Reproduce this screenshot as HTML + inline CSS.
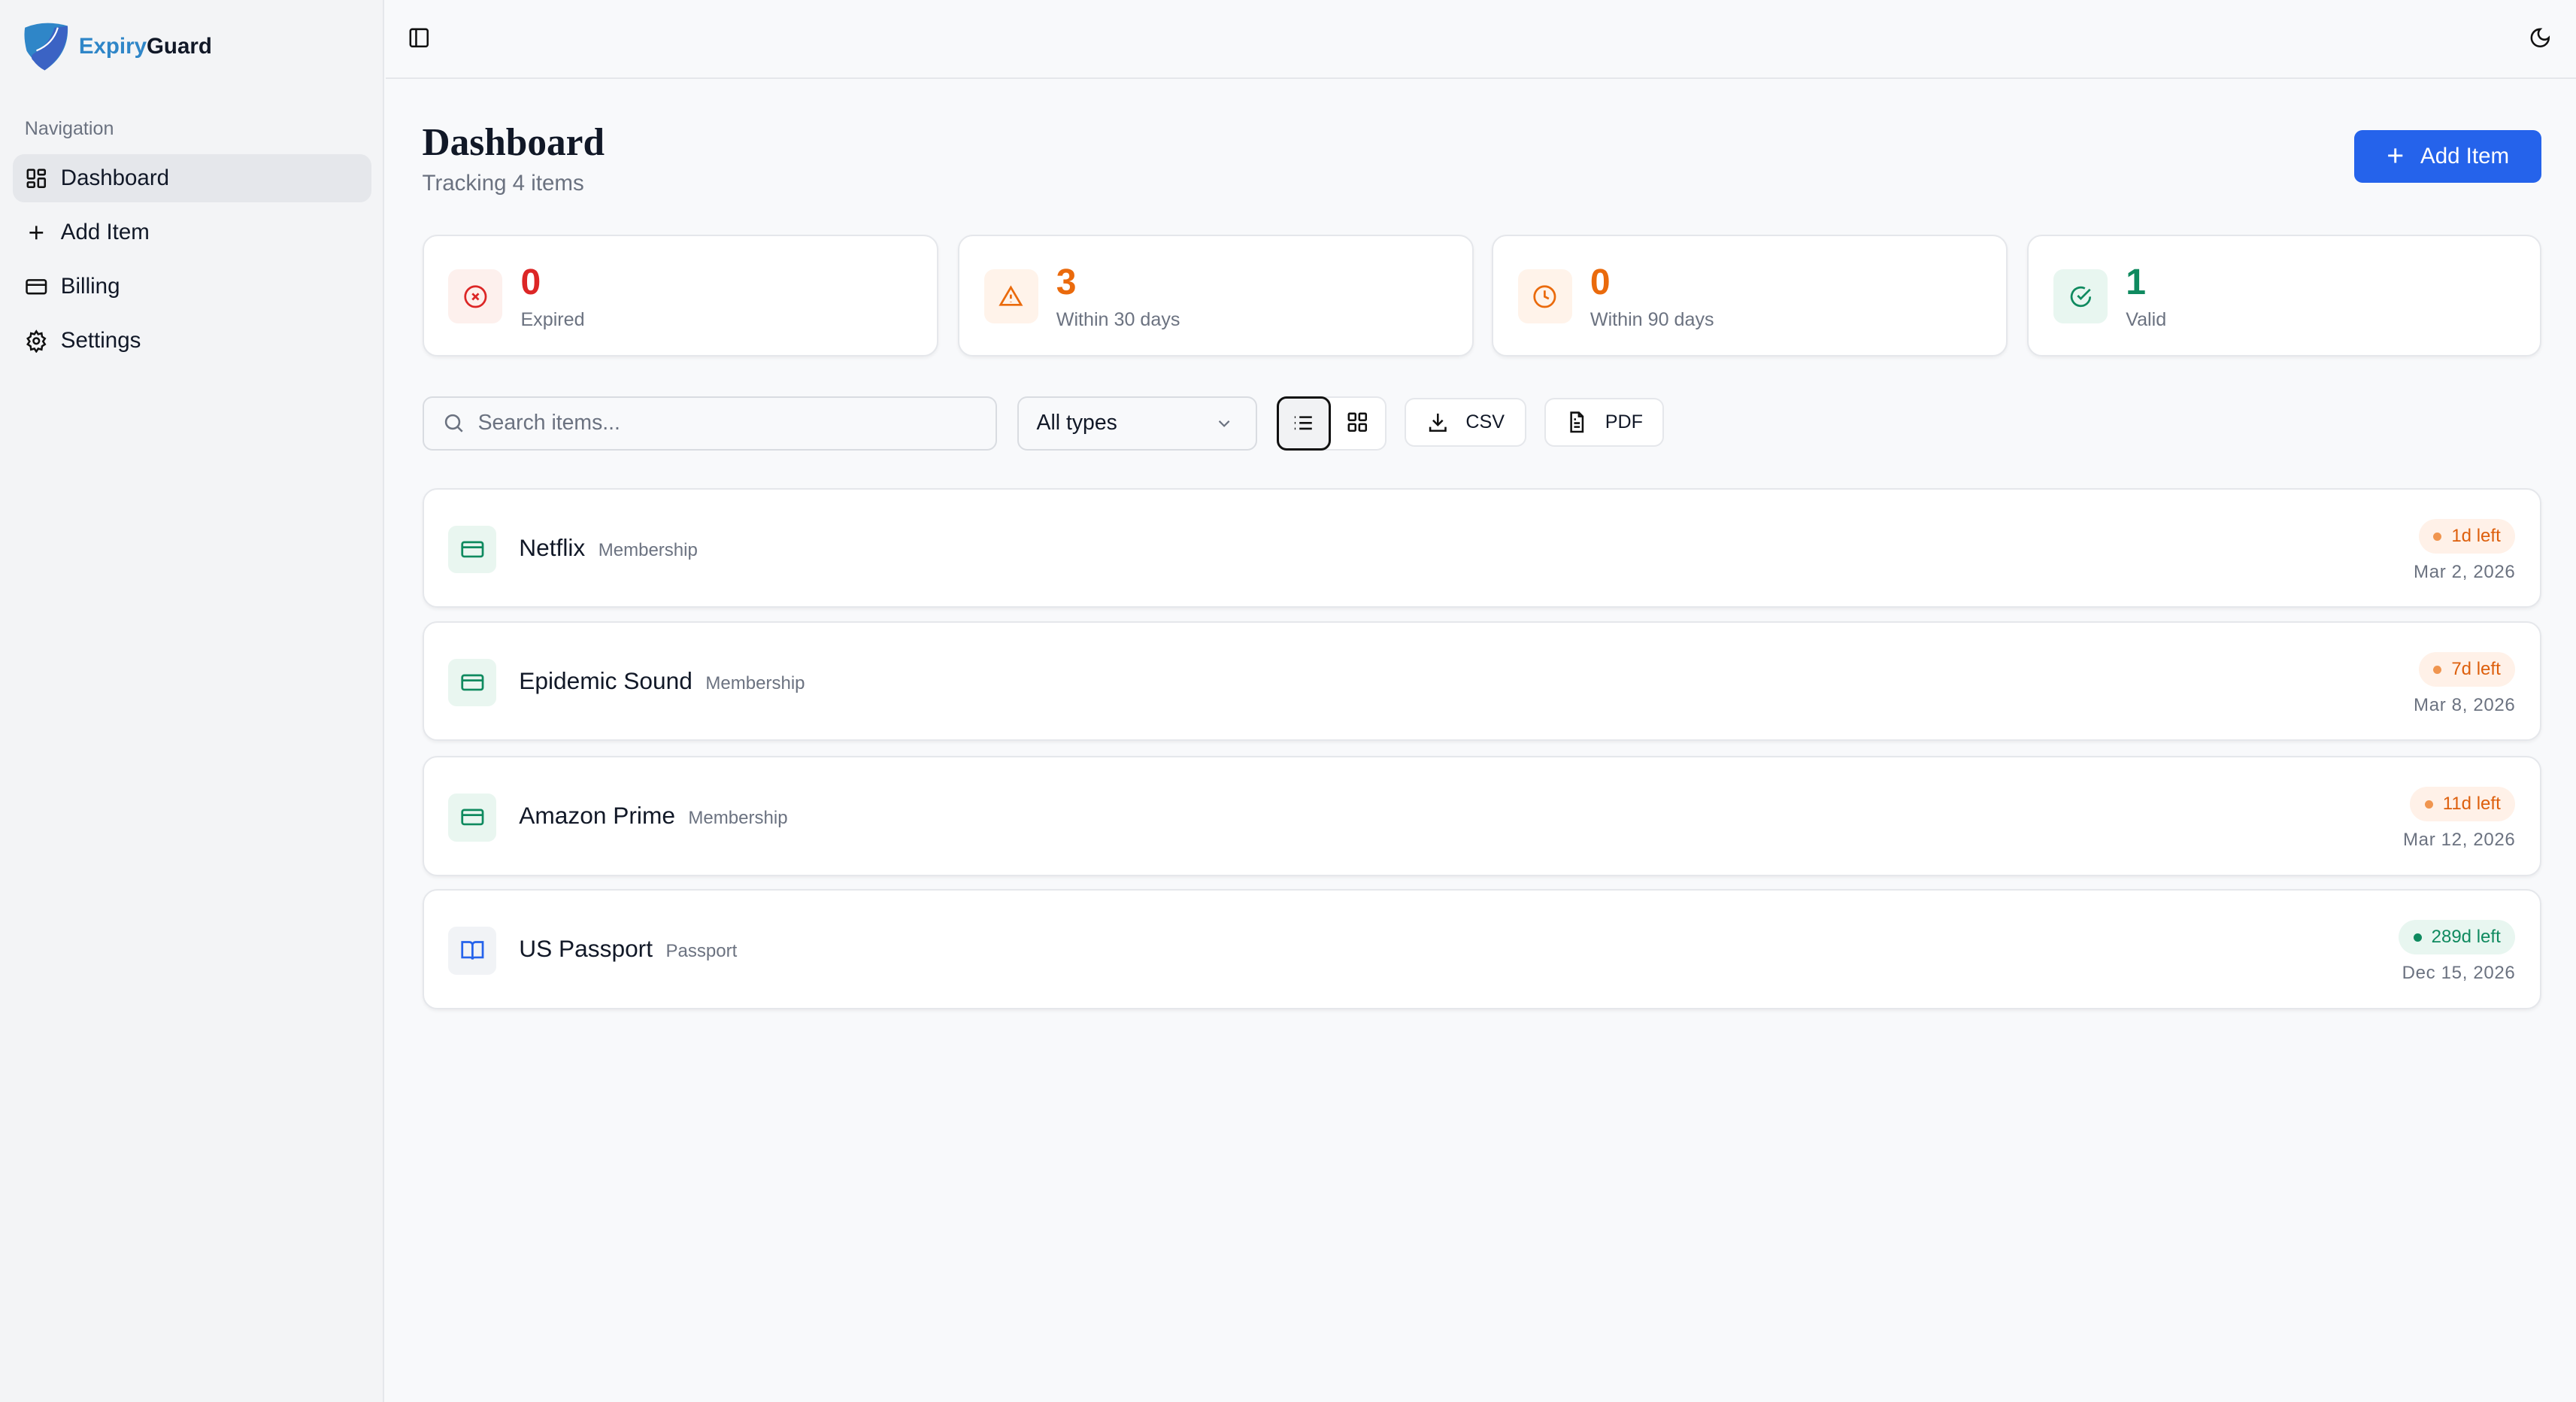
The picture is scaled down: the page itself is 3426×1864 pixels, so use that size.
<!DOCTYPE html>
<html><head><meta charset="utf-8"><style>
html{zoom:2.185}
*{box-sizing:border-box;margin:0;padding:0}
body{width:1568px;height:853px;background:#f8f9fb;font-family:"Liberation Sans",sans-serif;color:#111827;position:relative;overflow:hidden}
.sb{position:absolute;left:0;top:0;width:234px;height:853px;background:#f3f4f6;border-right:1px solid #e5e7eb}
.logo{position:absolute;left:14px;top:13px;display:flex;align-items:center;gap:6px;font-weight:bold;font-size:13.5px}
.nav-h{position:absolute;left:15px;top:72px;font-size:11.5px;color:#6b7280}
.ni{position:absolute;left:8px;width:218px;height:29px;border-radius:7px;display:flex;align-items:center;gap:8px;padding-left:7px;font-size:13.5px;color:#111827}
.ni svg{width:14px;height:14px}
.top{position:absolute;left:235px;top:0;right:0;height:48px;border-bottom:1px solid #e5e7eb;background:#f8f9fb}
h1{position:absolute;left:257px;top:73px;font-family:"Liberation Serif",serif;font-size:23.5px;font-weight:bold}
.sub{position:absolute;left:257px;top:104px;font-size:13.5px;color:#6b7280}
.btn{position:absolute;left:1433px;top:79px;width:114px;height:32px;background:#2563eb;color:#fff;border-radius:5px;font-size:13.5px;display:flex;align-items:center;justify-content:center;gap:10px}
.card{position:absolute;top:143px;height:74px;width:314px;background:#fff;border:1px solid #e5e7eb;border-radius:9px;box-shadow:0 1px 2px rgba(0,0,0,.05)}
.card .ic{position:absolute;left:15px;top:20px;width:33px;height:33px;border-radius:6px;display:flex;align-items:center;justify-content:center}
.card .n{position:absolute;left:59px;top:15px;font-size:22px;font-weight:bold}
.card .l{position:absolute;left:59px;top:44px;font-size:11.5px;color:#6b7280}
.inp{position:absolute;top:241px;height:33px;border:1px solid #d9dce1;border-radius:6px;background:#f8f9fb;display:flex;align-items:center;font-size:13px}
.row{position:absolute;left:257px;width:1290px;height:73px;background:#fff;border:1px solid #e5e7eb;border-radius:9px;box-shadow:0 1px 2px rgba(0,0,0,.05)}
.row .ic{position:absolute;left:15px;top:22px;width:29px;height:29px;border-radius:5px;display:flex;align-items:center;justify-content:center}
.row .t{position:absolute;left:58px;top:27px;font-size:14.5px;display:flex;align-items:baseline;gap:8px}
.row .t span{font-size:11px;color:#6b7280}
.bd{position:absolute;right:15px;top:18px;height:21px;border-radius:11px;padding:0 9px;font-size:11px;display:flex;align-items:center;gap:6px}
.bd i{width:5px;height:5px;border-radius:50%;display:block}
.o{background:#fff1e8;color:#dd5f0c}.o i{background:#f0954f}
.g{background:#e8f6f0;color:#0f8a5f}.g i{background:#0f8a5f}
.dt{position:absolute;right:15px;top:44px;font-size:11px;color:#6b7280;letter-spacing:.3px}
</style></head><body>
<div class="sb">
 <div class="logo"><svg width="28" height="31" viewBox="0 0 28 31"><path d="M1 4 Q13 -1 27 3 Q28 20 13 30 Q4 22 2 18 Q0 10 1 4Z" fill="#2f86c8"/><path d="M19 4 Q16 14 6 20 Q4 22 6 24 Q9 28 13 30 Q27 20 27 3Z" fill="#3b63c4"/><path d="M21 4 Q18 14 8 18" stroke="#fff" stroke-width="1" fill="none"/></svg><span><span style="color:#2f86c8">Expiry</span>Guard</span></div>
 <div class="nav-h">Navigation</div>
 <div class="ni" style="top:94px;background:#e5e7eb"><svg viewBox="0 0 24 24" fill="none" stroke="#111" stroke-width="2"><rect x="3" y="3" width="7" height="9" rx="1"/><rect x="14" y="3" width="7" height="5" rx="1"/><rect x="14" y="12" width="7" height="9" rx="1"/><rect x="3" y="16" width="7" height="5" rx="1"/></svg>Dashboard</div>
 <div class="ni" style="top:127px"><svg viewBox="0 0 24 24" fill="none" stroke="#111" stroke-width="2"><path d="M12 5v14M5 12h14"/></svg>Add Item</div>
 <div class="ni" style="top:160px"><svg viewBox="0 0 24 24" fill="none" stroke="#111" stroke-width="2"><rect x="2" y="5" width="20" height="14" rx="2"/><path d="M2 10h20"/></svg>Billing</div>
 <div class="ni" style="top:193px"><svg viewBox="0 0 24 24" fill="none" stroke="#111" stroke-width="2"><circle cx="12" cy="12" r="3"/><path d="M12 2l2 3 3.5-1 .5 3.5 3 2-2 3 2 3-3 2-.5 3.5-3.5-1-2 3-2-3-3.5 1-.5-3.5-3-2 2-3-2-3 3-2 .5-3.5 3.5 1z"/></svg>Settings</div>
</div>
<div class="top">
 <svg style="position:absolute;left:13px;top:16px" width="14" height="14" viewBox="0 0 24 24" fill="none" stroke="#111" stroke-width="2"><rect x="3" y="3" width="18" height="18" rx="2"/><path d="M9 3v18"/></svg>
 <svg style="position:absolute;right:15px;top:16px" width="14" height="14" viewBox="0 0 24 24" fill="none" stroke="#111" stroke-width="2"><path d="M12 3a6 6 0 0 0 9 9 9 9 0 1 1-9-9z"/></svg>
</div>
<h1>Dashboard</h1>
<div class="sub">Tracking 4 items</div>
<div class="btn"><span style="font-size:18px;font-weight:300">+</span>Add Item</div>

<div class="card" style="left:257px"><div class="ic" style="background:#fdf0ed"><svg width="15" height="15" viewBox="0 0 24 24" fill="none" stroke="#dc2626" stroke-width="2"><circle cx="12" cy="12" r="10"/><path d="M15 9l-6 6M9 9l6 6"/></svg></div><div class="n" style="color:#dc2626">0</div><div class="l">Expired</div></div>
<div class="card" style="left:583px"><div class="ic" style="background:#fff3ea"><svg width="15" height="15" viewBox="0 0 24 24" fill="none" stroke="#ea6a0c" stroke-width="2"><path d="M12 3L2 20h20z"/><path d="M12 10v4M12 17v.5"/></svg></div><div class="n" style="color:#ea6a0c">3</div><div class="l">Within 30 days</div></div>
<div class="card" style="left:908px"><div class="ic" style="background:#fff3ea"><svg width="15" height="15" viewBox="0 0 24 24" fill="none" stroke="#ea6a0c" stroke-width="2"><circle cx="12" cy="12" r="10"/><path d="M12 6v6l4 2"/></svg></div><div class="n" style="color:#ea6a0c">0</div><div class="l">Within 90 days</div></div>
<div class="card" style="left:1234px;width:313px"><div class="ic" style="background:#e8f6f0"><svg width="15" height="15" viewBox="0 0 24 24" fill="none" stroke="#0f8a5f" stroke-width="2"><path d="M21 12a9 9 0 1 1-5-8"/><path d="M9 11l3 3 9-9"/></svg></div><div class="n" style="color:#0f8a5f">1</div><div class="l">Valid</div></div>

<div class="inp" style="left:257px;width:350px;padding-left:11px;color:#6b7280"><svg width="14" height="14" viewBox="0 0 24 24" fill="none" stroke="#6b7280" stroke-width="2" style="margin-right:8px"><circle cx="11" cy="11" r="7"/><path d="M21 21l-5-5"/></svg>Search items...</div>
<div class="inp" style="left:619px;width:146px;padding-left:11px">All types<svg style="position:absolute;right:13px" width="12" height="12" viewBox="0 0 24 24" fill="none" stroke="#6b7280" stroke-width="2"><path d="M6 9l6 6 6-6"/></svg></div>
<div class="inp" style="left:777px;width:67px;background:#fff;border-color:#e5e7eb"></div>
<div class="inp" style="left:777px;width:33px;border:1.5px solid #111;background:#f1f2f4;justify-content:center"><svg width="14" height="14" viewBox="0 0 24 24" fill="none" stroke="#111" stroke-width="2"><path d="M8 6h13M8 12h13M8 18h13M3 6h1M3 12h1M3 18h1"/></svg></div>
<svg style="position:absolute;left:819px;top:250px" width="14" height="14" viewBox="0 0 24 24" fill="none" stroke="#111" stroke-width="2"><rect x="3" y="3" width="7" height="7" rx="1"/><rect x="14" y="3" width="7" height="7" rx="1"/><rect x="3" y="14" width="7" height="7" rx="1"/><rect x="14" y="14" width="7" height="7" rx="1"/></svg>
<div class="inp" style="left:855px;top:242px;height:30px;width:74px;background:#fff;border-color:#e5e7eb;justify-content:center;gap:10px;font-size:11.5px"><svg width="14" height="14" viewBox="0 0 24 24" fill="none" stroke="#111" stroke-width="2"><path d="M12 3v12M7 10l5 5 5-5M4 17v4h16v-4"/></svg>CSV</div>
<div class="inp" style="left:940px;top:242px;height:30px;width:73px;background:#fff;border-color:#e5e7eb;justify-content:center;gap:10px;font-size:11.5px"><svg width="14" height="14" viewBox="0 0 24 24" fill="none" stroke="#111" stroke-width="2"><path d="M14 2H6v20h12V6z"/><path d="M14 2v4h4M9 13h6M9 17h6M9 9h2"/></svg>PDF</div>

<div class="row" style="top:297px"><div class="ic" style="background:#e9f6f0"><svg width="15" height="15" viewBox="0 0 24 24" fill="none" stroke="#0f8a5f" stroke-width="2"><rect x="2" y="5" width="20" height="14" rx="2"/><path d="M2 10h20"/></svg></div><div class="t">Netflix<span>Membership</span></div><div class="bd o"><i></i>1d left</div><div class="dt">Mar 2, 2026</div></div>
<div class="row" style="top:378px"><div class="ic" style="background:#e9f6f0"><svg width="15" height="15" viewBox="0 0 24 24" fill="none" stroke="#0f8a5f" stroke-width="2"><rect x="2" y="5" width="20" height="14" rx="2"/><path d="M2 10h20"/></svg></div><div class="t">Epidemic Sound<span>Membership</span></div><div class="bd o"><i></i>7d left</div><div class="dt">Mar 8, 2026</div></div>
<div class="row" style="top:460px"><div class="ic" style="background:#e9f6f0"><svg width="15" height="15" viewBox="0 0 24 24" fill="none" stroke="#0f8a5f" stroke-width="2"><rect x="2" y="5" width="20" height="14" rx="2"/><path d="M2 10h20"/></svg></div><div class="t">Amazon Prime<span>Membership</span></div><div class="bd o"><i></i>11d left</div><div class="dt">Mar 12, 2026</div></div>
<div class="row" style="top:541px"><div class="ic" style="background:#f1f3f6"><svg width="15" height="15" viewBox="0 0 24 24" fill="none" stroke="#2563eb" stroke-width="2"><path d="M2 4h7a3 3 0 0 1 3 3v14a2 2 0 0 0-2-2H2zM22 4h-7a3 3 0 0 0-3 3v14a2 2 0 0 1 2-2h8z"/></svg></div><div class="t">US Passport<span>Passport</span></div><div class="bd g"><i></i>289d left</div><div class="dt">Dec 15, 2026</div></div>
</body></html>
